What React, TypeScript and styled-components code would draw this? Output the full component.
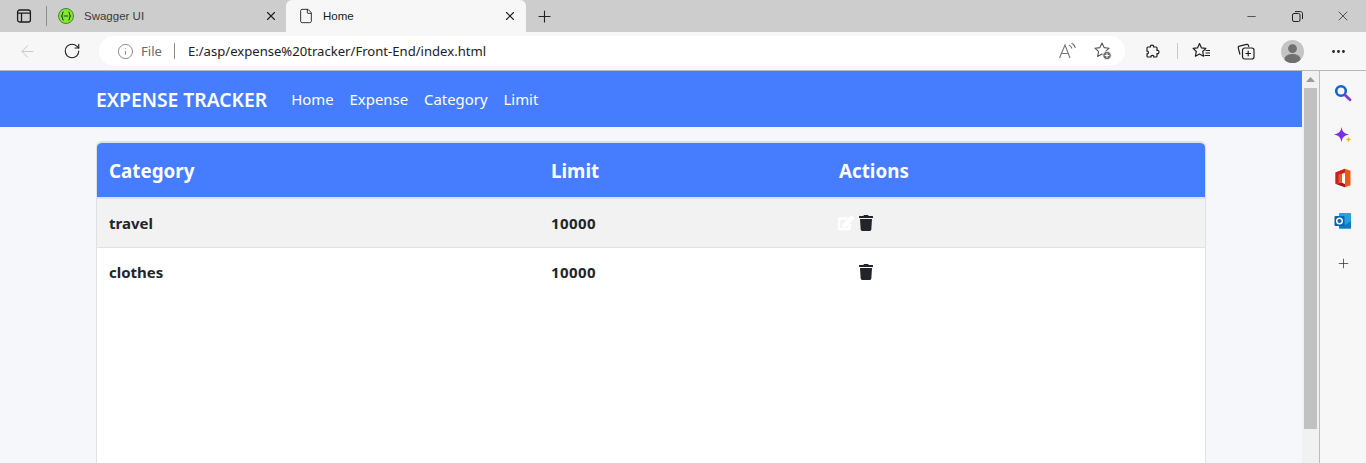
import React from 'react';
import styled, { createGlobalStyle } from 'styled-components';
import { FaEdit, FaTrash } from 'react-icons/fa';
import { ArrowLeft, RotateCw, Info, X, Plus, Minus, MoreHorizontal, File } from 'lucide-react';

const GlobalStyle = createGlobalStyle`
  html, body { margin: 0; padding: 0; height: 463px; overflow: hidden; background: #f7f7f7; }
  body { font-family: "Noto Sans", "Open Sans", sans-serif; color: #212529; }
  * { box-sizing: border-box; }
`;

const Browser = styled.div`
  width: 1366px;
  height: 463px;
  display: flex;
  flex-direction: column;
  overflow: hidden;
`;

const TabStrip = styled.div`
  height: 32px;
  flex: none;
  background: #cdcdcd;
  display: flex;
  align-items: flex-end;
`;

const StripIcon = styled.div`
  width: 48px;
  height: 32px;
  flex: none;
  display: flex;
  align-items: center;
  padding-left: 16px;
  border-right: 1px solid transparent;
  position: relative;
  &::after {
    content: '';
    position: absolute;
    right: 0;
    top: 6px;
    height: 20px;
    width: 1px;
    background: #8f8f8f;
  }
`;

const Tab = styled.div<{ $active?: boolean }>`
  width: ${(p) => (p.$active ? '240px' : '238px')};
  height: 32px;
  flex: none;
  display: flex;
  align-items: center;
  padding: ${(p) => (p.$active ? '0 9px 0 12px' : '0 8px 0 10px')};
  border-radius: 6px 6px 0 0;
  background: ${(p) => (p.$active ? '#f7f7f7' : 'transparent')};
  font-family: "Liberation Sans", "Noto Sans", sans-serif;
  font-size: 11.5px;
  color: ${(p) => (p.$active ? '#1a1a1a' : '#3b3b3b')};
`;

const TabTitle = styled.span<{ $gap: number }>`
  flex: 1;
  margin-left: ${(p) => p.$gap}px;
`;

const NewTab = styled.div`
  width: 36px;
  height: 32px;
  flex: none;
  display: flex;
  align-items: center;
  justify-content: center;
`;

const WindowControls = styled.div`
  margin-left: auto;
  display: flex;
  height: 32px;
  align-items: center;
`;

const WindowButton = styled.div`
  width: 46px;
  height: 32px;
  display: flex;
  align-items: center;
  justify-content: center;
  color: #222;
`;

const Toolbar = styled.div`
  height: 39px;
  flex: none;
  background: #f7f7f7;
  display: flex;
  align-items: center;
  border-bottom: 1px solid #b9b9b9;
`;

const NavButton = styled.div<{ $width: number }>`
  width: ${(p) => p.$width}px;
  height: 30px;
  flex: none;
  display: flex;
  align-items: center;
  justify-content: center;
`;

const AddressBar = styled.div`
  width: 1026px;
  height: 30px;
  margin-left: 10px;
  flex: none;
  border-radius: 15px;
  background: #fff;
  display: flex;
  align-items: center;
  padding-left: 18px;
  font-size: 13.1px;
`;

const FileLabel = styled.span`
  color: #6b6b6b;
  margin-left: 7px;
`;

const AddressDivider = styled.span`
  width: 1px;
  height: 16px;
  background: #8a8a8a;
  margin: 0 13px 0 12px;
`;

const Url = styled.span`
  color: #222;
`;

const AddressActions = styled.div`
  margin-left: auto;
  display: flex;
  gap: 15px;
  align-items: center;
  padding-right: 12px;
`;

const ToolIcons = styled.div`
  display: flex;
  align-items: center;
  flex: 1;
`;

const ToolDivider = styled.span`
  width: 1px;
  height: 16px;
  margin-left: -4px;
  background: #c9c9c9;
`;

const Avatar = styled.div`
  width: 23px;
  height: 23px;
  border-radius: 50%;
  background: #c4c4c4;
  overflow: hidden;
`;

const Workspace = styled.div`
  flex: 1;
  min-height: 0;
  display: flex;
`;

const Page = styled.div`
  width: 1302px;
  flex: none;
  background: #f5f7fb;
  overflow: hidden;
`;

const Navbar = styled.nav`
  height: 56px;
  background: #467dff;
  display: flex;
  align-items: center;
  padding: 1px 0 0 96px;
  color: #fff;
`;

const Brand = styled.div`
  font-size: 19.3px;
  font-weight: 600;
  margin-right: 24px;
  white-space: nowrap;
`;

const NavLinks = styled.div`
  display: flex;
  gap: 16px;
  padding-bottom: 2px;
  font-size: 14.9px;
`;

const TableCard = styled.div`
  margin: 14px 0 0 96px;
  width: 1110px;
  border: 1px solid #dee2e6;
  border-top-width: 2px;
  border-bottom: 0;
  border-radius: 6px 6px 0 0;
  background: #fff;
  height: 400px;
  overflow: hidden;
`;

const Row = styled.div<{ $kind: 'head' | 'odd' | 'even' }>`
  display: grid;
  grid-template-columns: 442px 288px 1fr;
  align-items: center;
  height: ${(p) => (p.$kind === 'head' ? '54px' : p.$kind === 'odd' ? '49px' : '48px')};
  padding-top: ${(p) => (p.$kind === 'head' ? '1px' : '0')};
  background: ${(p) => (p.$kind === 'head' ? '#467dff' : p.$kind === 'odd' ? '#f2f2f2' : '#fff')};
  color: ${(p) => (p.$kind === 'head' ? '#fff' : '#212529')};
  font-size: ${(p) => (p.$kind === 'head' ? '18.8px' : '15px')};
  font-weight: 700;
  border-bottom: ${(p) => (p.$kind === 'odd' ? '1px solid #dee2e6' : '0')};
`;

const HeadGap = styled.div`
  height: 2px;
  background: #dee2e6;
`;

const Cell = styled.div`
  padding-left: 12px;
`;

const Amount = styled(Cell)`
  letter-spacing: 0.4px;
`;

const Actions = styled.div`
  padding-left: 11px;
  display: flex;
  align-items: center;
  gap: 4px;
`;

const ActionSlot = styled.span<{ $tone: 'light' | 'dark'; $hidden?: boolean }>`
  height: 16px;
  display: flex;
  align-items: center;
  visibility: ${(p) => (p.$hidden ? 'hidden' : 'visible')};
  color: ${(p) => (p.$tone === 'light' ? '#fff' : '#212529')};
`;

const Scrollbar = styled.div`
  width: 18px;
  flex: none;
  background: #f1f1f1;
  display: flex;
  flex-direction: column;
  padding-left: 2px;
  border-right: 1px solid #bdbdbd;
`;

const ScrollArrow = styled.div`
  height: 17px;
  width: 13px;
  display: flex;
  align-items: center;
  justify-content: center;
`;

const ScrollThumb = styled.div`
  width: 13px;
  height: 341px;
  background: #c1c1c1;
`;

const SideBar = styled.aside`
  flex: 1;
  background: #f7f7f7;
  display: flex;
  flex-direction: column;
  align-items: center;
  padding-top: 11px;
  gap: 20.5px;
`;

const SideSlot = styled.div`
  width: 20px;
  height: 22px;
  display: flex;
  align-items: center;
  justify-content: center;
`;

const categories = [
  { name: 'travel', limit: '10000', kind: 'odd' as const, editable: true },
  { name: 'clothes', limit: '10000', kind: 'even' as const, editable: false }
];

function PanelIcon() {
  return (
    <svg width="16" height="16" viewBox="0 0 16 16" fill="none" stroke="#1c1c1c" strokeWidth="1.3">
      <rect x="1.6" y="2" width="12.8" height="12" rx="2" />
      <path d="M1.6 5.2h12.8M5.5 5.2V14" />
    </svg>
  );
}

function SwaggerIcon() {
  return (
    <svg width="16" height="16" viewBox="0 0 16 16">
      <circle cx="8" cy="8" r="7.5" fill="#85ea2d" stroke="#3b7a1a" strokeWidth="0.9" />
      <path d="M5.600 3.800C4 4 4.800 7.300 3.600 8c1.200.7.400 4 2 4.200M10.400 3.800C12 4 11.200 7.300 12.400 8c-1.200.7-.4 4-2 4.200M5.800 8h4.400" fill="none" stroke="#173647" strokeWidth="1.1" />
    </svg>
  );
}

function ReadAloudIcon() {
  return (
    <svg width="20" height="18" viewBox="0 0 20 18" fill="none" stroke="#767676" strokeWidth="1.1">
      <path d="M1.500 16 7 3l5 13M3.200 11.500h7.600" />
      <path d="M11 3c1.500.8 2.500 2 2.900 3.500M13.500 1c2 1 3.400 2.800 3.800 5" />
    </svg>
  );
}

function FavAddIcon() {
  return (
    <svg width="20" height="20" viewBox="0 0 20 20">
      <path d="M9 2l2.100 4.600 5 .6-3.700 3.400 1 4.900L9 13l-4.400 2.500 1-4.900L1.900 7.200l5-.6z" fill="none" stroke="#555" strokeWidth="1.1" strokeLinejoin="round" />
      <circle cx="14" cy="14.500" r="4.200" fill="#6e6e6e" stroke="#fff" strokeWidth="0.8" />
      <path d="M14 12.300v4.400M11.800 14.500h4.400" stroke="#fff" strokeWidth="1.100" />
    </svg>
  );
}

function ExtensionIcon() {
  return (
    <svg width="18" height="18" viewBox="0 0 18 18" fill="none" stroke="#1f1f1f" strokeWidth="1.2" strokeLinejoin="round">
      <path d="M3 6c0-.6.4-1 1-1h2.500c-1-2.600 4-2.600 3 0H12c.6 0 1 .4 1 1v2.500c2.600-1 2.600 4 0 3V14c0 .6-.4 1-1 1H9.700c.8-2.200-3.400-2.200-2.600 0H4c-.6 0-1-.4-1-1v-2.300c1.900.7 1.900-3.100 0-2.400z" />
    </svg>
  );
}

function FavListIcon() {
  return (
    <svg width="20" height="18" viewBox="0 0 20 18" fill="none" stroke="#1f1f1f" strokeWidth="1.200" strokeLinejoin="round">
      <path d="M7.500 1.500l2 4.400 4.400.5-3.200 3.100.9 4.700-4.100-2.300-4.100 2.300.9-4.700L1.100 6.400l4.400-.5z" />
      <path d="M13.500 8.500h4.500M13.500 11h4.500M12.500 13.500h5.500" />
    </svg>
  );
}

function CollectionsIcon() {
  return (
    <svg width="20" height="20" viewBox="0 0 20 20" fill="none" stroke="#1f1f1f" strokeWidth="1.200">
      <path d="M4 13.500 2.300 7.200c-.3-1 .2-1.800 1.200-2l7-1.800c1-.2 1.800.3 2 1.200l.3 1.200" />
      <rect x="6.500" y="7" width="11.500" height="11" rx="2.200" />
      <path d="M12.200 9.800v5.400M9.500 12.500h5.400" />
    </svg>
  );
}

function AvatarFigure() {
  return (
    <svg width="23" height="23" viewBox="0 0 23 23">
      <circle cx="11.500" cy="8.600" r="4.400" fill="#6f6f6f" />
      <ellipse cx="11.500" cy="19" rx="8" ry="5" fill="#6f6f6f" />
    </svg>
  );
}

function SearchSideIcon() {
  return (
    <svg width="18" height="18" viewBox="0 0 18 18" fill="none">
      <circle cx="7" cy="7" r="4.800" stroke="#1660d0" strokeWidth="2.600" />
      <path d="M11 11l5 4.800" stroke="#7b3fd6" strokeWidth="2.800" strokeLinecap="round" />
    </svg>
  );
}

function SparkIcon() {
  return (
    <svg width="18" height="18" viewBox="0 0 18 18">
      <path d="M7.500 0c.8 4.600 2.300 6.200 7.500 7.500-5.200 1.300-6.700 2.900-7.500 8-.8-5.100-2.300-6.700-7.500-8C5.200 6.200 6.700 4.600 7.500 0z" fill="#7a2ee6" />
      <path d="M14.500 9.500c.3 1.700.9 2.400 3 2.900-2.100.5-2.700 1.300-3 3.100-.3-1.800-.9-2.600-3-3.100 2.100-.5 2.700-1.200 3-2.900z" fill="#ffb900" />
    </svg>
  );
}

function OfficeIcon() {
  return (
    <svg width="16" height="20" viewBox="0 0 16 20">
      <path d="M10 .8l5.500 2v14.400L10 19.200.5 15.800V4.500z" fill="#eb5a13" />
      <path d="M10 .8.5 4.500v11.300l3-1.200V6.500L10 4.800z" fill="#c8202b" />
      <path d="M.5 15.800l6.500-1 3 1.100v3.300z" fill="#a9122a" />
      <path d="M10 4.800v11.100l-3-1.100V6z" fill="#fff" />
    </svg>
  );
}

function OutlookIcon() {
  return (
    <svg width="18" height="18" viewBox="0 0 18 18">
      <rect x="5" y="1" width="12" height="15.500" rx="1" fill="#1fa4e0" />
      <path d="M5 9l6 4 6-4v7.500H5z" fill="#0f78c4" />
      <rect x="0.500" y="4" width="10" height="10" rx="1" fill="#0a64ad" />
      <circle cx="5.500" cy="9" r="2.800" fill="none" stroke="#fff" strokeWidth="1.400" />
    </svg>
  );
}

export default function App() {
  return (
    <Browser>
      <GlobalStyle />
      <TabStrip>
        <StripIcon>
          <PanelIcon />
        </StripIcon>
        <Tab>
          <SwaggerIcon />
          <TabTitle $gap={10}>Swagger UI</TabTitle>
          <X size={14} color="#222" strokeWidth={2} />
        </Tab>
        <Tab $active>
          <File size={16} color="#222" strokeWidth={1.4} />
          <TabTitle $gap={9}>Home</TabTitle>
          <X size={14} color="#222" strokeWidth={2} />
        </Tab>
        <NewTab>
          <Plus size={19} color="#222" strokeWidth={1.4} />
        </NewTab>
        <WindowControls>
          <WindowButton>
            <Minus size={13} strokeWidth={1.3} />
          </WindowButton>
          <WindowButton>
            <svg width="11" height="11" viewBox="0 0 11 11" fill="none" stroke="#222" strokeWidth="1">
              <rect x="0.500" y="2.500" width="7.500" height="8" rx="1.500" />
              <path d="M3 .6h5.500c1.200 0 2 .8 2 2V8" />
            </svg>
          </WindowButton>
          <WindowButton>
            <X size={16} strokeWidth={1.1} />
          </WindowButton>
        </WindowControls>
      </TabStrip>
      <Toolbar>
        <NavButton $width={55}>
          <ArrowLeft size={19} color="#c4c4c4" strokeWidth={1.2} />
        </NavButton>
        <NavButton $width={34}>
          <RotateCw size={18} color="#222" strokeWidth={1.5} />
        </NavButton>
        <AddressBar>
          <Info size={17} color="#767676" strokeWidth={1.2} />
          <FileLabel>File</FileLabel>
          <AddressDivider />
          <Url>E:/asp/expense%20tracker/Front-End/index.html</Url>
          <AddressActions>
            <ReadAloudIcon />
            <FavAddIcon />
          </AddressActions>
        </AddressBar>
        <ToolIcons>
          <NavButton $width={56}>
            <ExtensionIcon />
          </NavButton>
          <ToolDivider />
          <NavButton $width={48}>
            <FavListIcon />
          </NavButton>
          <NavButton $width={40}>
            <CollectionsIcon />
          </NavButton>
          <NavButton $width={52}>
            <Avatar>
              <AvatarFigure />
            </Avatar>
          </NavButton>
          <NavButton $width={40}>
            <MoreHorizontal size={17} color="#222" strokeWidth={2} />
          </NavButton>
        </ToolIcons>
      </Toolbar>
      <Workspace>
        <Page>
          <Navbar>
            <Brand>EXPENSE TRACKER</Brand>
            <NavLinks>
              <span>Home</span>
              <span>Expense</span>
              <span>Category</span>
              <span>Limit</span>
            </NavLinks>
          </Navbar>
          <TableCard>
            <Row $kind="head">
              <Cell>Category</Cell>
              <Cell>Limit</Cell>
              <Cell>Actions</Cell>
            </Row>
            <HeadGap />
            {categories.map((c) => (
              <Row key={c.name} $kind={c.kind}>
                <Cell>{c.name}</Cell>
                <Amount>{c.limit}</Amount>
                <Actions>
                  <ActionSlot $tone="light" $hidden={!c.editable}>
                    <FaEdit size={16} stroke="currentColor" strokeWidth={24} />
                  </ActionSlot>
                  <ActionSlot $tone="dark">
                    <FaTrash size={16} />
                  </ActionSlot>
                </Actions>
              </Row>
            ))}
          </TableCard>
        </Page>
        <Scrollbar>
          <ScrollArrow>
            <svg width="9" height="5" viewBox="0 0 9 5">
              <path d="M4.500 0 9 5H0z" fill="#9a9a9a" />
            </svg>
          </ScrollArrow>
          <ScrollThumb />
        </Scrollbar>
        <SideBar>
          <SideSlot>
            <SearchSideIcon />
          </SideSlot>
          <SideSlot>
            <SparkIcon />
          </SideSlot>
          <SideSlot>
            <OfficeIcon />
          </SideSlot>
          <SideSlot>
            <OutlookIcon />
          </SideSlot>
          <SideSlot>
            <Plus size={15} color="#333" strokeWidth={1.2} />
          </SideSlot>
        </SideBar>
      </Workspace>
    </Browser>
  );
}
